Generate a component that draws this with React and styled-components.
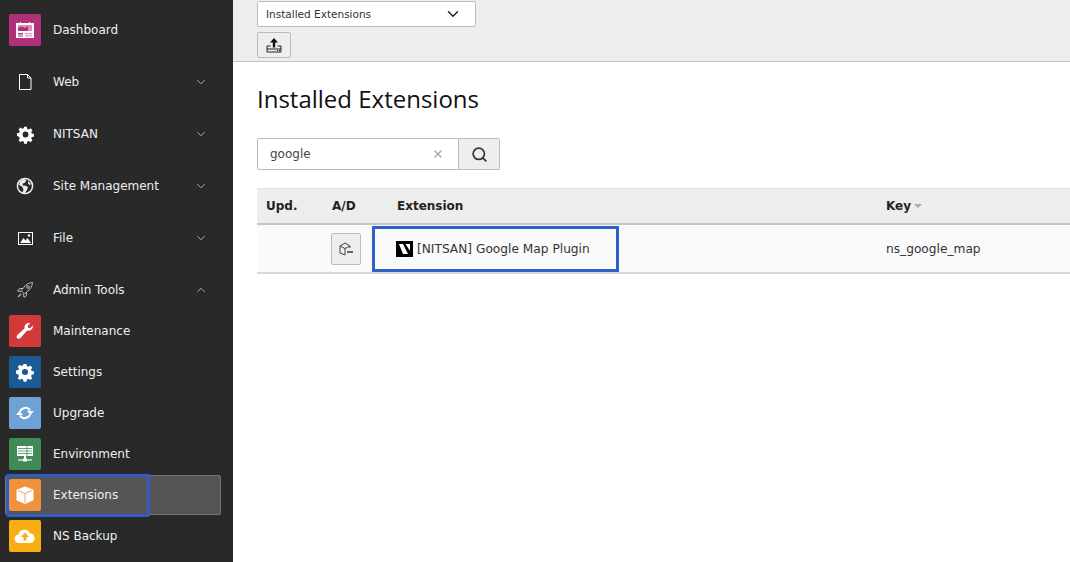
import styled, { createGlobalStyle } from 'styled-components';
import { ChevronDown, ChevronUp, Search, X } from 'lucide-react';

const GlobalStyle = createGlobalStyle`
	html, body {
		margin: 0;
		padding: 0;
		height: 100%;
		overflow: hidden;
		background: #fff;
		font-family: 'DejaVu Sans', Verdana, sans-serif;
	}
`;

const Page = styled.div`
	display: flex;
	width: 1070px;
	height: 562px;
	overflow: hidden;
`;

const Sidebar = styled.nav`
	width: 233px;
	flex-shrink: 0;
	background: #292929;
	padding-top: 14px;
	box-sizing: border-box;
`;

const TopItem = styled.div`
	display: flex;
	align-items: center;
	height: 32px;
	padding-left: 9px;
	margin-bottom: 20px;
	color: #eee;
	font-size: 12px;
`;

const SubList = styled.div`
	display: flex;
	flex-direction: column;
	gap: 9px;
	margin-top: -11px;
`;

const SubItem = styled.div`
	display: flex;
	align-items: center;
	height: 32px;
	padding-left: 9px;
	color: #eee;
	font-size: 12px;
	position: relative;
`;

const ActiveBack = styled.div`
	position: absolute;
	left: 5px;
	top: -4px;
	width: 216px;
	height: 40px;
	box-sizing: border-box;
	background: #555;
	border: 1px solid #777;
	border-radius: 2px;
`;

const Marker = styled.div`
	position: absolute;
	left: 6px;
	top: -5px;
	width: 144px;
	height: 43px;
	box-sizing: border-box;
	border: 3px solid #2f5dc4;
	border-radius: 2px;
`;

const IconTile = styled.span`
	position: relative;
	width: 32px;
	height: 32px;
	border-radius: 2px;
	background: ${(p) => p.$bg || 'transparent'};
	display: flex;
	align-items: center;
	justify-content: center;
	flex-shrink: 0;
`;

const ItemLabel = styled.span`
	position: relative;
	margin-left: 12px;
	flex: 1;
	white-space: nowrap;
`;

const Caret = styled.span`
	display: flex;
	margin-right: 25px;
	color: #bbb;
`;

const Main = styled.main`
	flex: 1;
	min-width: 0;
`;

const TopBar = styled.div`
	height: 60px;
	background: #eee;
	border-bottom: 1px solid #c3c3c3;
	padding: 1px 0 0 24px;
`;

const Select = styled.div`
	display: flex;
	align-items: center;
	justify-content: space-between;
	width: 219px;
	height: 26px;
	box-sizing: border-box;
	padding: 0 13px 0 8px;
	background: #fff;
	border: 1px solid #bbb;
	border-radius: 2px;
	font-size: 10.5px;
	color: #333;
`;

const IconButton = styled.div`
	display: flex;
	align-items: center;
	justify-content: center;
	width: 34px;
	height: 26px;
	margin-top: 5px;
	box-sizing: border-box;
	background: #eee;
	border: 1px solid #bbb;
	border-radius: 2px;
`;

const Content = styled.div`
	padding: 0 0 0 24px;
`;

const Title = styled.h1`
	margin: 0;
	padding-top: 20px;
	font-family: 'Open Sans', 'Noto Sans', sans-serif;
	font-weight: 400;
	font-size: 24px;
	line-height: 34px;
	color: #111;
`;

const SearchRow = styled.div`
	display: flex;
	width: 243px;
	height: 32px;
	margin-top: 22px;
`;

const SearchInput = styled.div`
	flex: 1;
	display: flex;
	align-items: center;
	justify-content: space-between;
	padding: 0 14px 0 12px;
	background: #fff;
	border: 1px solid #bbb;
	border-radius: 2px 0 0 2px;
	font-size: 12px;
	color: #444;
`;

const SearchButton = styled.div`
	width: 41px;
	display: flex;
	align-items: center;
	justify-content: center;
	box-sizing: border-box;
	background: #eee;
	border: 1px solid #bbb;
	border-left: none;
	border-radius: 0 2px 2px 0;
	color: #333;
`;

const Table = styled.div`
	margin-top: 18px;
	width: 813px;
	font-size: 12px;
	color: #333;
`;

const HeadRow = styled.div`
	display: grid;
	grid-template-columns: 66px 65px 489px 1fr;
	align-items: center;
	height: 37px;
	box-sizing: border-box;
	background: #ededed;
	border-top: 1px solid #e2e2e2;
	border-bottom: 2px solid #c6c6c6;
	font-weight: 700;
	color: #222;
`;

const HeadCell = styled.div`
	padding-left: 9px;
	display: flex;
	align-items: center;
	gap: 3px;
`;

const SortMark = styled.span`
	width: 0;
	height: 0;
	border-left: 4px solid transparent;
	border-right: 4px solid transparent;
	border-top: 4px solid #aaa;
`;

const BodyRow = styled.div`
	display: grid;
	grid-template-columns: 66px 65px 489px 1fr;
	align-items: center;
	height: 49px;
	box-sizing: border-box;
	background: #fafafa;
	border-bottom: 2px solid #d8d8d8;
`;

const Cell = styled.div`
	position: relative;
	padding-left: ${(p) => p.$pad || 9}px;
	display: flex;
	align-items: center;
	font-size: 12.2px;
`;

const ToggleButton = styled.div`
	width: 30px;
	height: 32px;
	box-sizing: border-box;
	display: flex;
	align-items: center;
	justify-content: center;
	background: #eee;
	border: 1px solid #bbb;
	border-radius: 2px;
`;

const ExtName = styled.span`
	margin-left: 4px;
	white-space: nowrap;
`;

const RowMarker = styled.div`
	position: absolute;
	left: -16px;
	top: -15px;
	width: 247px;
	height: 46px;
	box-sizing: border-box;
	border: 3px solid #2f62c8;
`;

const Gear = ({ size = 20 }) => (
	<svg width={size} height={size} viewBox="0 0 20 20">
		<path
			fill="#fff"
			fillRule="evenodd"
			d="M8.4 1h3.2l.5 2.5 1.7.7 2.1-1.4 2.2 2.2-1.4 2.1.7 1.7 2.5.5v3.2l-2.500.5-.7 1.700 1.400 2.100-2.200 2.200-2.100-1.400-1.700.7-.5 2.500H8.400l-.5-2.500-1.700-.7-2.100 1.400-2.200-2.200 1.400-2.100-.7-1.700L0 11.600V8.400l2.600-.5.7-1.700-1.400-2.100 2.200-2.200 2.100 1.400 1.700-.7zM10 6.600a3.400 3.400 0 1 0 0 6.800 3.400 3.400 0 0 0 0-6.800z"
			transform="translate(1 1) scale(.9)"
		/>
	</svg>
);

const DashboardIcon = () => (
	<svg width="18" height="18" viewBox="0 0 18 18">
		<path d="M0 2h4V1h1v1h8V1h1v1h4v15H0z" fill="#fff" />
		<rect x="2" y="4" width="14" height="6" fill="#dc8fbd" />
		<path d="M2 10V7l4-1.500 3 1.500 3-2v5z" fill="#b0307a" />
		<rect x="2" y="12" width="5" height="1.500" fill="#b0307a" />
		<rect x="2" y="14.500" width="5" height="1" fill="#b0307a" />
		<rect x="9" y="12" width="7" height="1.200" fill="#dc8fbd" />
		<rect x="9" y="14.300" width="7" height="1.200" fill="#dc8fbd" />
	</svg>
);

const PageIcon = () => (
	<svg width="14" height="16" viewBox="0 0 14 16">
		<path d="M1.500.5h8l3.500 3.500v11.500H1.500z" fill="none" stroke="#fff" />
		<path d="M9.500.5V4H13" fill="none" stroke="#fff" />
	</svg>
);

const GlobeIcon = () => (
	<svg width="18" height="18" viewBox="0 0 18 18">
		<circle cx="9" cy="9" r="7.600" fill="none" stroke="#eee" strokeWidth="1.500" />
		<path d="M8 2 4 4.500 3 8l3 1.500 1.500 3-1 3.500 2 .5L11 13l1-3-3-1.500-2 .2-.5-2L9 5.500l1.500-2zM12 4l3 3-1.500 1L12 6.500z" fill="#eee" />
	</svg>
);

const ImageIcon = () => (
	<svg width="15" height="13" viewBox="0 0 15 13">
		<rect x=".5" y=".5" width="14" height="12" fill="none" stroke="#fff" />
		<path d="M2 11l3.500-5 2 2.500L9.500 6 13 11z" fill="#fff" />
		<circle cx="11" cy="3.500" r="1.200" fill="#fff" />
	</svg>
);

const RocketIcon = () => (
	<svg width="18" height="18" viewBox="0 0 18 18" fill="none" stroke="#bbb">
		<path d="M16.500 1.500c-4 .3-7 2.200-9.500 6L5 9.500 8.500 13l2-2c3.800-2.500 5.700-5.500 6-9.500z" />
		<path d="M7 7.500H3.500L1.500 10l3.500.5M10.500 11v3.500L8 16.500 7.500 13M4.500 12.500 2 16l3.500-2.500" />
		<circle cx="12" cy="6" r="1.300" />
	</svg>
);

const WrenchIcon = () => (
	<svg width="20" height="20" viewBox="0 0 20 20">
		<path
			d="M18 5c0 3-2.700 5.300-5.800 4.600L5.500 17c-.9 1-2.400 1.100-3.300.2-.9-.9-.8-2.300.2-3.200l7.300-6.700C9 4.300 11.200 1.800 14 2c.4 0 .8.100 1.100.2L12.700 5l.5 1.800 1.900.5 2.700-2.900c.1.200.2.400.2.600z"
			fill="#fff"
		/>
	</svg>
);

const SyncIcon = () => (
	<svg width="20" height="20" viewBox="0 0 20 20">
		<path d="M5 8.500A5.600 5.600 0 0 1 15 7.500" fill="none" stroke="#fff" strokeWidth="2" />
		<path d="M12 8h7l-3.500 4z" fill="#fff" />
		<path d="M15 11.500A5.600 5.600 0 0 1 5 12.500" fill="none" stroke="#fff" strokeWidth="2" />
		<path d="M1 12h7L4.500 8z" fill="#fff" />
	</svg>
);

const EnvironmentIcon = () => (
	<svg width="18" height="18" viewBox="0 0 18 18">
		<rect x="1" y="1" width="16" height="10" fill="#fff" />
		<path d="M2 3.500h14M2 6h14M2 8.500h14M11 1v10" stroke="#3f8a55" strokeWidth=".8" />
		<path d="M9 11v4" stroke="#fff" strokeWidth="2" />
		<path d="M2 15h14" stroke="#fff" strokeWidth="1.200" />
		<rect x="7" y="13.500" width="4" height="3" fill="#fff" />
	</svg>
);

const BoxIcon = () => (
	<svg width="20" height="20" viewBox="0 0 20 20">
		<path d="M10 2l8 3v10l-8 3.500L2 15V5z" fill="#fff" stroke="#fff" strokeLinejoin="round" />
		<path d="M3 5.500l7 3 7-3M10 8.500V18" fill="none" stroke="#f0913c" strokeWidth=".8" />
	</svg>
);

const CloudIcon = () => (
	<svg width="22" height="16" viewBox="0 0 22 16">
		<path d="M5 15a4.200 4.200 0 0 1-.6-8.400A6 6 0 0 1 15.800 5.200 5 5 0 0 1 17 15z" fill="#fff" />
		<path d="M11 4.500l4 4.500h-2.500v3.500h-3V9H7z" fill="#f8ad12" />
	</svg>
);

const UploadIcon = () => (
	<svg width="16" height="15" viewBox="0 0 16 15">
		<path d="M8 0l4 4.500H9.200v5H6.800v-5H4z" fill="#111" />
		<path d="M4.500 8H1v6h14V8h-3.500M1 11h14M11 12.500h1M13 12.500h1" fill="none" stroke="#222" />
	</svg>
);

const ToggleIcon = () => (
	<svg width="18" height="18" viewBox="0 0 18 18" fill="none" stroke="#444">
		<path d="M8 15 3 13V6l5-3 5 3v2" />
		<path d="M3 6l5 2.500L13 6M8 8.500V15" />
		<path d="M10 12h6" strokeWidth="1.600" />
	</svg>
);

const NitsanLogo = () => (
	<svg width="17" height="16" viewBox="0 0 17 16">
		<rect width="17" height="16" fill="#000" />
		<path d="M3 3h4l5 10H7z" fill="#fff" />
		<path d="M9.500 3H14v7z" fill="#fff" />
	</svg>
);

const topItems = [
	{ label: 'Web', icon: <PageIcon /> },
	{ label: 'NITSAN', icon: <Gear size={19} /> },
	{ label: 'Site Management', icon: <GlobeIcon /> },
	{ label: 'File', icon: <ImageIcon /> },
];

const subItems = [
	{ label: 'Maintenance', bg: '#d13a38', icon: <WrenchIcon /> },
	{ label: 'Settings', bg: '#1b5a94', icon: <Gear size={20} /> },
	{ label: 'Upgrade', bg: '#6ea2d4', icon: <SyncIcon /> },
	{ label: 'Environment', bg: '#3f8a55', icon: <EnvironmentIcon /> },
	{ label: 'Extensions', bg: '#f0913c', icon: <BoxIcon />, active: true },
	{ label: 'NS Backup', bg: '#f8ad12', icon: <CloudIcon /> },
];

const App = () => {
	return (
		<Page>
			<GlobalStyle />
			<Sidebar>
				<TopItem>
					<IconTile $bg="#b0307a">
						<DashboardIcon />
					</IconTile>
					<ItemLabel>Dashboard</ItemLabel>
				</TopItem>
				{topItems.map((item) => (
					<TopItem key={item.label}>
						<IconTile>{item.icon}</IconTile>
						<ItemLabel>{item.label}</ItemLabel>
						<Caret>
							<ChevronDown size={14} strokeWidth={1.5} />
						</Caret>
					</TopItem>
				))}
				<TopItem>
					<IconTile>
						<RocketIcon />
					</IconTile>
					<ItemLabel>Admin Tools</ItemLabel>
					<Caret>
						<ChevronUp size={14} strokeWidth={1.5} />
					</Caret>
				</TopItem>
				<SubList>
					{subItems.map((item) => (
						<SubItem key={item.label}>
							{item.active && <ActiveBack />}
							<IconTile $bg={item.bg}>{item.icon}</IconTile>
							<ItemLabel>{item.label}</ItemLabel>
							{item.active && <Marker />}
						</SubItem>
					))}
				</SubList>
			</Sidebar>
			<Main>
				<TopBar>
					<Select>
						Installed Extensions
						<ChevronDown size={18} color="#222" />
					</Select>
					<IconButton>
						<UploadIcon />
					</IconButton>
				</TopBar>
				<Content>
					<Title>Installed Extensions</Title>
					<SearchRow>
						<SearchInput>
							google
							<X size={12} color="#aaa" strokeWidth={3} />
						</SearchInput>
						<SearchButton>
							<Search size={17} strokeWidth={2.4} />
						</SearchButton>
					</SearchRow>
					<Table>
						<HeadRow>
							<HeadCell>Upd.</HeadCell>
							<HeadCell>A/D</HeadCell>
							<HeadCell>Extension</HeadCell>
							<HeadCell>
								Key
								<SortMark />
							</HeadCell>
						</HeadRow>
						<BodyRow>
							<Cell />
							<Cell $pad={8}>
								<ToggleButton>
									<ToggleIcon />
								</ToggleButton>
							</Cell>
							<Cell $pad={8}>
								<RowMarker />
								<NitsanLogo />
								<ExtName>[NITSAN] Google Map Plugin</ExtName>
							</Cell>
							<Cell>ns_google_map</Cell>
						</BodyRow>
					</Table>
				</Content>
			</Main>
		</Page>
	);
};

export default App;
